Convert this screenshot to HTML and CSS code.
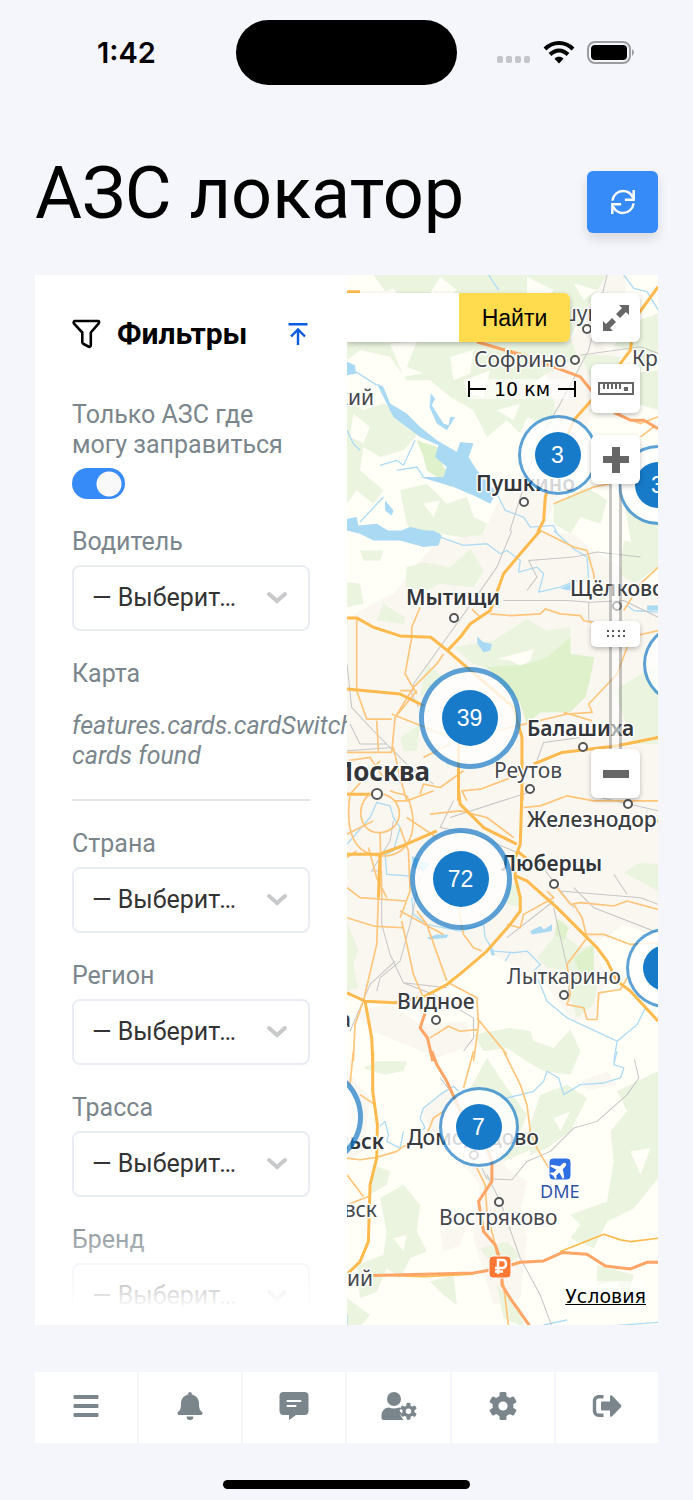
FILE: index.html
```html
<!DOCTYPE html>
<html lang="ru">
<head>
  <meta charset="UTF-8">
  <meta name="viewport" content="width=device-width, initial-scale=1.0">
  <title>АЗС локатор</title>
  <link rel="stylesheet" href="styles.css">
</head>
<body>
  <div class="status-bar">
    <span class="time">1:42</span>
    <span class="island"></span>
    <svg class="status-icons" width="140" height="26" viewBox="0 0 140 26">
      <g fill="#c3c5ca">
        <rect x="1" y="16" width="6" height="7" rx="2"/>
        <rect x="10" y="16" width="6" height="7" rx="2"/>
        <rect x="19" y="16" width="6" height="7" rx="2"/>
        <rect x="28" y="16" width="6" height="7" rx="2"/>
      </g>
      <g fill="none" stroke="#000" stroke-width="4">
        <path d="M49 9C57 1 69 1 77 9"/>
        <path d="M54 14.500C59.500 9 66.500 9 72 14.500"/>
      </g>
      <path d="M63 23.500L58.500 18.800C61 16.200 65 16.200 67.500 18.800Z"/>
      <rect x="92" y="2" width="42" height="21" rx="7" fill="none" stroke="#9b9ca0" stroke-width="2"/>
      <rect x="95" y="5" width="36" height="15" rx="4"/>
      <path d="M136 9q4 3.500 0 7z" fill="#9b9ca0"/>
    </svg>
  </div>

  <header class="page-header">
    <h1>АЗС локатор</h1>
    <button class="refresh" type="button" aria-label="Обновить">
      <svg width="26" height="26" viewBox="0 0 28 28" fill="none" stroke="#fff" stroke-width="2.600">
        <path d="M2.500 12.500C3.500 6 8.500 2.200 14 2.200c4.500 0 8.500 2.300 10.500 7"/>
        <path d="M25.500 1v10.500h-9.500"/>
        <path d="M25.500 15.500C24.500 22 19.500 25.800 14 25.800c-4.500 0-8.500-2.300-10.500-7"/>
        <path d="M2.500 27v-10.500h9.500"/>
      </svg>
    </button>
  </header>

  <main class="workspace">
    <section class="filters">
      <div class="filters-head">
        <svg width="29" height="30" viewBox="0 0 29 30" fill="none" stroke="#000" stroke-width="2.600" stroke-linejoin="round">
          <path d="M2.500 2h24q1.200 1 0 2.600L18.800 13.500V26.500q-.8 2-2.400 1L11.500 25q-1.200-.8-1.200-2V13.500L2 4.600Q1.200 3 2.500 2z"/>
        </svg>
        <h2>Фильтры</h2>
        <button class="collapse" type="button" aria-label="Свернуть">
          <svg width="20" height="24" viewBox="0 0 20 24" fill="none" stroke="#0a5be0" stroke-width="2.400">
            <path d="M.5 2.200h19M10 23V8M3 14.500L10 7.500l7 7"/>
          </svg>
        </button>
      </div>

      <form class="fields">
        <div class="field">
          <label for="only">Только АЗС где могу заправиться</label>
          <input class="switch" id="only" type="checkbox" checked>
        </div>
        <div class="field">
          <label for="driver">Водитель</label>
          <select id="driver"><option>— Выберите —</option></select>
        </div>
        <div class="field">
          <p class="caption">Карта</p>
          <p class="note">features.cards.cardSwitcher.No cards found</p>
        </div>
        <hr>
        <div class="field">
          <label for="country">Страна</label>
          <select id="country"><option>— Выберите —</option></select>
        </div>
        <div class="field">
          <label for="region">Регион</label>
          <select id="region"><option>— Выберите —</option></select>
        </div>
        <div class="field">
          <label for="route">Трасса</label>
          <select id="route"><option>— Выберите —</option></select>
        </div>
        <div class="field">
          <label for="brand">Бренд</label>
          <select id="brand"><option>— Выберите —</option></select>
        </div>
      </form>
    </section>

    <section class="map">
      <!-- terrain, three units per pixel, one group per tile -->
      <svg class="terrain" viewBox="0 0 933 3150" preserveAspectRatio="xMinYMin slice">
        <g transform="translate(-21 -15)">
          <path class="town" d="M620 300L700 200 800 15H860L840 240 760 400 720 540 640 700 600 810H420L470 700 560 600 620 480Z"/>
          <path class="wood" d="M100 15H800L740 110 690 200 710 260 620 310 560 350 640 380 650 480 560 440 540 490 500 450 440 500 400 420 330 380 270 330 200 330 150 260 60 240 21 270V70L140 70Z"/>
          <path class="wood" d="M21 390L70 420 130 400 210 440 235 490 190 540 120 560 70 530 60 600 130 660 100 700 50 660 21 700ZM180 660L260 640 320 700 380 680 400 740 440 760 420 810 300 790 230 810 200 760ZM720 250L840 260 830 310 760 350ZM760 200L953 130V240L900 300 880 250ZM640 700L740 650 800 690 780 760 720 740 690 790 640 760ZM850 690L953 760V880L880 860ZM870 310L953 300V420L890 400Z"/>
          <path class="field-hole" d="M120 70L160 55 210 130 130 150ZM300 20L350 60 310 90 270 70ZM150 220L230 215 200 290 250 310 190 320ZM330 260L400 240 390 310 340 330ZM370 330L450 300 430 380 380 370ZM300 480L350 430 410 440 390 500 330 500ZM470 420L540 400 520 450ZM560 20L640 60 610 100 560 70ZM700 40L770 60 730 90ZM40 430L90 470 70 520 30 500ZM250 700L300 690 280 740ZM780 220L830 210 810 250Z"/>
          <path class="park" d="M230 510L290 530 310 590 340 620 330 650 290 620 260 600 250 560Z"/>
          <path class="water" d="M21 275L45 285 48 310 21 315ZM110 340L130 350 150 400 200 430 240 470 290 510 350 545 360 515 400 520 385 560 410 600 445 640 470 665 450 700 410 680 340 650 240 620 310 620 320 590 285 560 295 525 240 500 200 470 160 440ZM272 370L285 385 275 405 310 460 325 465 330 440 345 440 320 480 290 460 268 410ZM135 690L160 720 155 735 135 720ZM21 745L50 740 55 765 110 760 160 790 210 770 300 790V810H100L60 790 21 780Z"/>
          <path class="river" d="M48 305L110 345M21 480L40 520 60 540M120 585L170 570 190 585 225 510M170 600L230 590 250 620M445 15L475 60M850 15L880 55 920 65 953 120M470 670L495 720 550 740 570 770 640 765 660 810M130 680L60 755"/>
          <path class="rail" d="M800 15L745 240 660 400 590 520 500 810M720 255L900 230 953 250"/>
          <path class="road thin" d="M410 215L560 255M820 430L900 460 953 440M900 500L940 470M640 700L760 650 810 640M600 800L700 810"/>
          <path class="road" d="M21 65H60M580 810L610 750 615 680 640 600 700 450 780 360 870 240 880 150 953 50"/>
          <path class="trunk" d="M410 215L560 260 720 320 760 370 830 430 870 450 910 450 953 475"/>
        </g>

        <g transform="translate(-21 765)">
          <path class="town" d="M300 30L520 0 700 10 760 60 953 180V830H21V270L60 240 160 190 250 80Z"/>
          <path class="wood" d="M60 60L130 60 120 90 70 90ZM21 155L60 160 70 220 21 230ZM200 110L250 95 330 110 390 55 430 120 400 170 300 160 260 180 195 170ZM110 270L130 220 195 260 190 280ZM340 350L460 330 560 265 620 300 690 290 690 370 760 380 740 440 650 420 460 420 400 400ZM850 30L953 50V110L880 160 840 130ZM820 480L953 400V640L880 640ZM180 620L240 580 230 660 190 660ZM260 400L310 440 240 500Z"/>
          <path class="park" d="M440 410L560 400 620 380 690 320 690 370 762 380 750 440 735 500 690 545 600 545 560 580 540 520Z"/>
          <path class="field-hole" d="M470 385L580 355 570 390 540 405 510 390ZM790 200L850 190 830 220Z"/>
          <path class="water" d="M60 0H280L305 15 295 45 250 50 180 30 90 0ZM410 318L430 335 455 340 450 360 430 365 412 340ZM660 175L710 150 690 180ZM920 225H953V240H920Z"/>
          <path class="river" d="M300 20L370 45 440 40 480 70 500 60 540 90 535 125 590 110 610 130 595 185 660 170 710 150M640 0L700 55 740 80 745 150M953 245L880 240 860 225"/>
          <path class="rail" d="M515 0L470 110 400 210 220 460 215 490 235 530M560 180L590 140 565 90 700 80 770 65 900 80M490 210L680 210 750 215 850 210 953 260M21 400L35 530 100 600 200 700 280 760M30 580L60 640 140 640M21 660L160 650M745 215V270L830 290M590 690L610 635 720 620"/>
          <path class="road thin" d="M50 265L50 480 80 565 155 565M310 370L290 400 220 470 165 560 155 665M240 230L215 290 215 320 195 430 230 490M395 235L420 260M450 250L510 255 600 250 615 235 660 250 720 255 730 270 770 280M600 0L700 50 740 60 760 130 765 170M953 110L900 160 850 240M470 600L680 550 755 545 745 520 830 430 860 350 840 320M865 320L953 300M380 810L365 780 420 775 540 730M155 550L330 620M155 665L21 665M110 570L115 660M165 560L230 480M180 480H215M670 545L755 570M250 680L330 640M21 690L90 680 130 740M160 650L180 740 200 810M120 690L30 790M370 720L300 770 250 760 240 790"/>
          <path class="road" d="M21 262H50L100 290 180 316 272 320 322 360 380 410 520 530 545 620 545 810M322 360L360 320 390 280 450 240 490 130 540 70 600 0M21 475L180 490 250 525M953 620L830 645 665 665 580 700M355 620V810M100 790H21"/>
        </g>

        <g transform="translate(-21 1545)">
          <path class="town" d="M21 30H953V440L850 400 760 460 800 560 760 680 700 690 600 560 430 480 330 560 240 620 120 640 21 600ZM40 660L150 640 240 700 380 690 400 760 290 800 100 720Z"/>
          <path class="wood" d="M21 390L55 480 40 520 55 590 21 600ZM850 245L900 215 953 220V300L880 260ZM500 290L540 270V345L500 340ZM650 380L680 400 680 440 720 470 760 460 760 540 775 560 760 640 710 680 690 620 700 540 620 530 590 500 640 440ZM400 730L510 710 570 720 580 750 640 770 690 715 720 780 690 850 610 840 560 810 500 770 430 780Z"/>
          <path class="park" d="M650 385L685 410 670 450 645 430ZM700 500L760 460V540L720 550Z"/>
          <path class="water" d="M260 440L290 430 325 430 320 440 270 445ZM570 420L600 405 610 415 635 400 635 420 575 430ZM445 460L465 490 455 495ZM215 195L270 220 250 240 220 230Z"/>
          <path class="river" d="M21 160L90 80 110 35 150 45 160 80 180 110 160 180 135 190 140 250 210 255M215 320L220 370 260 400 360 420 430 400 435 440 460 480 520 485 560 480 600 520 580 540 600 580 620 630 680 680 830 750 890 700 915 650M830 750L820 810M510 485L495 510"/>
          <path class="rail" d="M160 90L150 150 95 240 125 240 125 400 150 490 190 575 320 590M240 260L210 400 180 510 120 560 110 600M330 80L580 0M340 30L300 110 400 130 520 180 600 220 700 350M780 20L953 60M660 300L900 320 953 340M700 290L760 350 953 425M640 350L690 570 680 620M640 330L500 440M820 250L860 310M165 510L90 580 60 650 30 720M190 575L280 610 400 680V740L370 780"/>
          <path class="road thin" d="M110 0C40 20 50 130 120 125S200 30 130 10M30 10C15 120 40 190 120 195S230 130 215 60 190 20 150 0M120 125L125 320M200 80L290 140M180 110L205 180 210 300 180 380M160 30L200 30 280 0M100 90L21 130M85 170L110 260 140 320M21 290L60 320 200 330M230 360L260 400 320 570M21 380L100 405 190 410M180 360L310 430M185 390L220 550 250 620 240 660M115 320L110 460 70 630 45 700 40 810M355 350L370 430 400 470 425 480M50 180L21 200M270 70L360 60 440 80 520 140M550 50L600 45 680 15 760 30 953 30M500 400L540 410 550 370 640 320 620 300M650 290L690 340 720 335 820 345 860 330 953 355M700 340L725 380 740 440 680 520 690 610 680 640 730 650 740 685 770 685 775 605 840 595 860 560M740 430H790L870 460 953 455M270 740L325 705 360 720 410 715M325 575L410 620 415 700 400 810M410 680L500 790"/>
          <path class="road" d="M545 0L540 160 525 200 525 260 540 320 540 360 510 400 440 480 370 540 320 580 255 615 165 635 75 630 21 605M355 0L360 40 430 110 530 160M530 180L580 220M525 255L560 270 650 350 730 430 770 470 800 510 830 570 870 600 953 690M21 190L120 190 200 160 290 120M120 190L115 320M75 630L95 740 98 810"/>
          <path class="trunk" d="M255 665L240 710 262 740 278 810"/>
        </g>

        <g transform="translate(-21 2325)">
          <path class="town" d="M240 180L320 110 360 150 450 280 500 350 560 390 540 480 560 560 540 740 460 760 400 560 420 400 280 240ZM21 60L90 140 70 300 21 330ZM720 90L800 60 830 100 740 115ZM300 540L380 520 360 580 310 600Z"/>
          <path class="wood" d="M70 50L110 30 200 30 190 60 130 70ZM380 130L440 20 500 110 560 190 540 240 600 250 560 300 490 330 450 260ZM600 130L680 100 740 140 690 240 620 290 570 310 560 250ZM810 240L860 180 830 120 953 60V380L880 470 800 510 760 590 690 560 720 520 690 490 800 450 820 330ZM120 440L190 400 240 460 230 540 260 600 210 620 180 680 140 650 110 720 60 740 50 640 130 610 140 540ZM420 590L500 570 540 610 500 640 440 620ZM21 740L90 790 60 825H21ZM270 690L340 670 350 760 310 730ZM470 700L540 770 550 825 490 800ZM770 640L880 670 860 740 830 690 770 700ZM100 340L150 360 140 400 90 430Z"/>
          <path class="field-hole" d="M640 200L690 180 660 240ZM870 300L930 290 900 370ZM160 560L200 550 190 600Z"/>
          <path class="river" d="M830 0L820 40 850 50 840 80 790 95 720 100 670 130 655 80 620 60 610 90 580 120 500 140 440 190M355 120L340 105 300 130 250 170 240 200 255 230 240 240M120 225L135 210 145 250 140 270 180 290 190 240M610 820L680 805M820 822L953 812M21 790V825"/>
          <path class="rail" d="M882 25L895 80 860 130 770 210 700 230 630 300 560 330 515 385 440 382 425 350M300 80L340 130M440 370L480 450 540 620 600 730 635 825"/>
          <path class="road thin" d="M40 0L30 100M21 320L60 325 110 318 170 300 190 285 250 275 280 200 310 180M400 0L370 110M490 0L540 100 560 160 570 240 590 290 625 350M410 350L435 400 440 480 460 560 490 700 505 825M21 370L70 435M21 460L85 435M60 130L105 160"/>
          <path class="road" d="M98 0V120L112 220 110 320 90 400 85 570 60 630 21 668"/>
          <path class="road mid" d="M100 670L250 675 400 668M660 600L790 548 840 565 870 570 953 560"/>
          <path class="trunk" d="M275 0L290 40 320 90 370 200 440 290 455 330 455 390 415 450 430 540 465 580 485 640 485 700 510 740 570 825M100 672L400 664 480 650 540 632 610 628 665 603 740 608 795 643 870 652 920 632H953"/>
        </g>
      </svg>

      <!-- place names -->
      <svg class="places">
        <g class="dots">
          <circle cx="240" cy="54" r="4"/>
          <circle cx="228" cy="85" r="4"/>
          <circle cx="177" cy="227" r="4"/>
          <circle cx="107" cy="343" r="4"/>
          <circle cx="270" cy="331" r="4"/>
          <circle cx="236" cy="472" r="4"/>
          <circle cx="183" cy="514" r="4"/>
          <circle cx="30" cy="519" r="5"/>
          <circle cx="281" cy="529" r="4"/>
          <circle cx="207" cy="609" r="4"/>
          <circle cx="217" cy="720" r="4"/>
          <circle cx="89" cy="745" r="4"/>
          <circle cx="127" cy="880" r="4"/>
          <circle cx="152" cy="927" r="4"/>
        </g>
        <g class="names">
          <text x="211" y="46">шук</text>
          <text x="127" y="92">Софрино</text>
          <text x="285" y="91">Кр</text>
          <text x="27" y="130" text-anchor="end">кий</text>
          <text x="147" y="503">Реутов</text>
          <text x="160" y="709">Лыткарино</text>
          <text x="30" y="942" text-anchor="end">вск</text>
          <text x="26" y="1011" text-anchor="end">кий</text>
          <text x="92" y="950">Востряково</text>
        </g>
        <g class="names mid">
          <text x="223" y="321">Щёлково</text>
          <text x="180" y="552">Железнодорожный</text>
          <text x="50" y="734">Видное</text>
          <text x="4" y="752" text-anchor="end">ка</text>
          <text x="60" y="870">Домодедово</text>
        </g>
        <g class="names bold">
          <text x="129" y="216">Пушкино</text>
          <text x="59" y="330">Мытищи</text>
          <text x="180" y="461">Балашиха</text>
          <text x="154" y="596">Люберцы</text>
          <text x="37" y="874" text-anchor="end">Подольск</text>
          <text class="capital" x="83" y="506" text-anchor="end">Москва</text>
        </g>
        <g class="names airport"><text x="193" y="923">DME</text></g>
        <rect x="202" y="883" width="22" height="22" rx="4" fill="#2f6fe4" stroke="#fff"/>
        <path fill="#fff" d="M213 886q2 0 2 3v3l7 5v2l-7-2v4l2 2v1.500l-4-1-4 1V903l2-2v-4l-7 2v-2l7-5v-3q0-3 2-3z" transform="rotate(45 213 894)"/>
        <rect x="142" y="981" width="22" height="22" rx="4" fill="#ff7733" stroke="#fff"/>
        <path fill="none" stroke="#fff" stroke-width="2.500" d="M151 999V985h4q4 0 4 4t-4 4h-7M148 996.500h8"/>
      </svg>

      <button class="cluster small c1" type="button"><span>3</span></button>
      <button class="cluster small c2" type="button"><span>3</span></button>
      <button class="cluster large c3" type="button"><span>39</span></button>
      <button class="cluster small c4" type="button"><span></span></button>
      <button class="cluster large c5" type="button"><span>72</span></button>
      <button class="cluster small c6" type="button"><span></span></button>
      <button class="cluster large c7" type="button"><span></span></button>
      <button class="cluster small c8" type="button"><span>7</span></button>

      <div class="search">
        <input type="text" aria-label="Адрес">
        <button type="button">Найти</button>
      </div>

      <div class="scale">
        <svg width="18" height="16" viewBox="0 0 18 16"><path d="M1 0v16M1 8h17"/></svg>
        <span>10 км</span>
        <svg width="18" height="16" viewBox="0 0 18 16"><path d="M17 0v16M17 8H0"/></svg>
      </div>

      <div class="controls">
        <button class="control" type="button" aria-label="Развернуть">
          <svg width="26" height="26" viewBox="0 0 26 26" fill="#666">
            <path d="M16 0h10v10l-3-3-6 6-4-4 6-6zM10 26H0V16l3 3 6-6 4 4-6 6z"/>
          </svg>
        </button>
        <button class="control" type="button" aria-label="Линейка">
          <svg width="36" height="14" viewBox="0 0 36 14">
            <path fill="none" stroke="#666" stroke-width="2" d="M1 1h34v11H1zM6 1v6M10 1v6M14 1v6M18 1v6M22 1v6"/>
            <path fill="#666" d="M26 5h4v4h-4z"/>
          </svg>
        </button>
        <div class="zoom">
          <button class="control" type="button" aria-label="Приблизить">
            <svg width="26" height="26" viewBox="0 0 26 26"><path fill="#666" d="M9 0h8v9h9v7h-9v10H9V16H0V9h9z"/></svg>
          </button>
          <input type="range" min="3" max="17" value="9" aria-label="Масштаб">
          <button class="control" type="button" aria-label="Отдалить">
            <svg width="26" height="26" viewBox="0 0 26 26"><path fill="#666" d="M0 9h26v8H0z"/></svg>
          </button>
        </div>
      </div>

      <a class="terms" href="#">Условия</a>
    </section>
  </main>

  <nav class="tabs">
    <a href="#" aria-label="Меню">
      <svg width="36" height="28" viewBox="0 0 36 28">
        <rect x="5.500" y="3" width="25" height="4" rx="1"/><rect x="5.500" y="12" width="25" height="4" rx="1"/><rect x="5.500" y="21" width="25" height="4" rx="1"/>
      </svg>
    </a>
    <a href="#" aria-label="Уведомления">
      <svg width="36" height="28" viewBox="0 0 36 28">
        <path d="M18 0a1.800 1.800 0 0 1 1.800 1.800v.8C24 3.500 27 7 27 11.500c0 5 .8 6.500 2.800 8.300.8.800 1 1.400.6 2.200-.3.600-.8.900-1.600.9H7.200c-.8 0-1.300-.3-1.600-.9-.4-.8-.2-1.400.6-2.200C8.200 18 9 16.500 9 11.500 9 7 12 3.500 16.200 2.600v-.8A1.800 1.800 0 0 1 18 0zM14.500 24.600h7a3.500 3.500 0 0 1-7 0z"/>
      </svg>
    </a>
    <a href="#" aria-label="Сообщения">
      <svg width="36" height="28" viewBox="0 0 36 28">
        <path d="M7.500 0h21a4 4 0 0 1 4 4v15a4 4 0 0 1-4 4H20l-7 5.200V23H7.500a4 4 0 0 1-4-4V4a4 4 0 0 1 4-4z"/>
        <path stroke="#fff" stroke-width="2" stroke-linecap="round" d="M11.500 9h13M11.500 14h8"/>
      </svg>
    </a>
    <a href="#" aria-label="Профиль">
      <svg width="36" height="28" viewBox="0 0 36 28">
        <circle cx="13" cy="7" r="7"/>
        <path d="M.5 26v-2.500C.5 19 4 15.500 8 15.500c3 1.400 7 1.400 10 0l2.500.5-2 2.500 1.500 2-.5 3 3 4.500H2.500a2 2 0 0 1-2-2z"/>
        <g transform="translate(27.500 19.200)">
          <circle r="6"/>
          <rect x="-2" y="-8.500" width="4" height="17" rx="1"/>
          <rect x="-2" y="-8.500" width="4" height="17" rx="1" transform="rotate(60)"/>
          <rect x="-2" y="-8.500" width="4" height="17" rx="1" transform="rotate(120)"/>
          <circle r="2.700" fill="#fff"/>
        </g>
      </svg>
    </a>
    <a href="#" aria-label="Настройки">
      <svg width="36" height="28" viewBox="0 0 36 28">
        <g transform="translate(18 14)">
          <circle r="10.500"/>
          <rect x="-3.500" y="-14" width="7" height="28" rx="1.500"/>
          <rect x="-3.500" y="-14" width="7" height="28" rx="1.500" transform="rotate(60)"/>
          <rect x="-3.500" y="-14" width="7" height="28" rx="1.500" transform="rotate(120)"/>
          <circle r="4.600" fill="#fff"/>
        </g>
      </svg>
    </a>
    <a href="#" aria-label="Выход">
      <svg width="36" height="28" viewBox="0 0 36 28">
        <path d="M14.500 4.800H9.500a4 4 0 0 0-4 4v10.400a4 4 0 0 0 4 4h5" fill="none" stroke="#7b868c" stroke-width="3.400"/>
        <path d="M12 10.500q0-1 1-1h8V4.500q.2-2 2-1L32 13q.8 1 0 2l-9 9.500q-1.800 1-2-1V18.500h-8q-1 0-1-1z"/>
      </svg>
    </a>
  </nav>
  <div class="home-indicator"></div>
</body>
</html>
```
FILE: styles.css
```css
* {
  box-sizing: border-box;
}
body {
  margin: 0;
  height: 100vh;
  display: flex;
  flex-direction: column;
  background: #f4f6fb;
  color: #000;
  font-family: Roboto, "Open Sans", sans-serif;
  font-size: 25px;
  line-height: 30px;
}
h1, h2, p {
  margin: 0;
}
button, input, select {
  margin: 0;
  padding: 0;
  border: 0;
  font: inherit;
}
svg {
  display: block;
}

/* status bar */
.status-bar {
  display: grid;
  grid-template-columns: 1fr 221px 1fr;
  align-items: center;
  padding: 20px 57px 0;
}
.time {
  padding-left: 40px;
  font-family: Inter, sans-serif;
  font-size: 29px;
  font-weight: 600;
}
.island {
  height: 65px;
  border-radius: 33px;
  background: #000;
}
.status-icons {
  justify-self: end;
}

/* header */
.page-header {
  display: flex;
  justify-content: space-between;
  align-items: center;
  padding: 64px 35px 36px;
}
h1 {
  font-size: 72px;
  font-weight: 400;
  line-height: 90px;
}
.refresh {
  display: flex;
  justify-content: center;
  align-items: center;
  width: 71px;
  height: 62px;
  margin-top: 16px;
  border-radius: 6px;
  background: #378bf8;
  box-shadow: 0 6px 12px rgba(0, 0, 0, 0.12);
}

.workspace {
  flex: 1;
  min-height: 0;
  display: grid;
  grid-template-columns: 1fr 1fr;
  grid-template-rows: 100%;
  margin: 0 35px;
}

/* filters */
.filters {
  position: relative;
  min-width: 0;
  overflow: hidden;
  padding: 41px 37px 0;
  background: #fff;
}
.filters::after {
  content: "";
  position: absolute;
  left: 0;
  right: 0;
  bottom: 0;
  height: 110px;
  background: linear-gradient(rgba(255, 255, 255, 0), #fff 85%);
}
.filters-head {
  display: flex;
  align-items: center;
  height: 36px;
  margin-bottom: 48px;
}
h2 {
  flex: 1;
  margin-left: 16px;
  font-size: 30px;
  font-weight: 700;
}
.collapse {
  padding: 2px;
  background: none;
}
.field {
  margin-bottom: 28px;
  color: #7b868c;
}
.field label, .caption {
  display: block;
  margin-bottom: 8px;
}
.note {
  margin-top: 22px;
  font-style: italic;
}
hr {
  height: 2px;
  margin: 0 0 28px;
  border: 0;
  background: #e2e3e6;
}
.switch {
  appearance: none;
  display: block;
  width: 53px;
  height: 31px;
  border-radius: 16px;
  background: radial-gradient(circle at 37px 16px, #f9f9f9 12px, #378bf8 13px);
}
select {
  appearance: none;
  display: block;
  width: 100%;
  height: 66px;
  padding: 0 62px 0 18px;
  border: 2px solid #e9ecf2;
  border-radius: 8px;
  background: #fff url("data:image/svg+xml,%3Csvg xmlns='http://www.w3.org/2000/svg' width='22' height='14'%3E%3Cpath d='M3 3l8 7 8-7' fill='none' stroke='%23c8c9cb' stroke-width='4' stroke-linecap='round'/%3E%3C/svg%3E") no-repeat right 20px center;
  color: #333;
  text-overflow: ellipsis;
  white-space: nowrap;
  overflow: hidden;
}

/* map */
.map {
  position: relative;
  min-width: 0;
  overflow: hidden;
  background: #fffef7;
}
.terrain, .places {
  position: absolute;
  top: 0;
  left: 0;
  width: 100%;
  height: 100%;
}
.town { fill: #faf6f0; }
.wood { fill: #eaf4df; }
.park { fill: #def1cb; }
.field-hole { fill: #fffef7; }
.water { fill: #a9d9f3; }
.river, .rail, .road, .trunk {
  fill: none;
  stroke-linejoin: round;
}
.river {
  stroke: #afdcf4;
  stroke-width: 4;
}
.rail {
  stroke: #c6c6c6;
  stroke-width: 3;
}
.road {
  stroke: #ffba4d;
  stroke-width: 9;
}
.road.mid {
  stroke-width: 5;
}
.road.thin {
  stroke: #ffc57a;
  stroke-width: 5;
}
.trunk {
  stroke: #ffa566;
  stroke-width: 9;
}
.dots {
  fill: #fff;
  stroke: #555;
  stroke-width: 2;
}
.names {
  font-family: "Noto Sans", sans-serif;
  font-size: 21px;
  fill: #45484c;
  stroke: #fff;
  stroke-width: 3px;
  stroke-linejoin: round;
  paint-order: stroke;
}
.names.mid {
  font-weight: 500;
  fill: #3a3c40;
}
.names.bold {
  font-weight: 600;
  fill: #333539;
}
.capital {
  font-size: 26px;
  font-weight: 700;
}
.names.airport {
  font-size: 18px;
  fill: #2f55a4;
}

.cluster {
  position: absolute;
  display: flex;
  justify-content: center;
  align-items: center;
  border: 3px solid rgba(23, 123, 201, 0.7);
  border-radius: 50%;
  background: rgba(255, 255, 255, 0.8);
  background-clip: padding-box;
  color: #fff;
  font-family: "Liberation Sans", Arial, sans-serif;
  font-size: 23px;
  transform: translate(-50%, -50%);
}
.cluster span {
  width: 46px;
  height: 46px;
  border-radius: 50%;
  background: #177bc9;
  line-height: 46px;
}
.small {
  width: 80px;
  height: 80px;
}
.large {
  width: 102px;
  height: 102px;
  border-width: 5px;
}
.large span {
  width: 56px;
  height: 56px;
  line-height: 56px;
}
.c1 { left: 211px; top: 180px; }
.c2 { left: 311px; top: 210px; }
.c3 { left: 123px; top: 443px; }
.c4 { left: 336px; top: 389px; }
.c5 { left: 114px; top: 604px; }
.c6 { left: 319px; top: 693px; }
.c7 { left: -35px; top: 842px; }
.c8 { left: 132px; top: 852px; }

.search {
  position: absolute;
  top: 18px;
  left: 0;
  right: 88px;
  display: flex;
  height: 49px;
  border-radius: 0 6px 6px 0;
  overflow: hidden;
  box-shadow: 0 2px 5px rgba(0, 0, 0, 0.25);
}
.search input {
  flex: 1;
  min-width: 0;
  background: #fff;
}
.search button {
  width: 111px;
  background: #ffdb4d;
  color: #000;
  font-family: "Liberation Sans", Arial, sans-serif;
  font-size: 23px;
}
.scale {
  position: absolute;
  top: 104px;
  right: 82px;
  display: flex;
  align-items: center;
  gap: 8px;
  height: 20px;
  background: rgba(255, 255, 255, 0.6);
  font-family: "DejaVu Sans", Verdana, sans-serif;
  font-size: 19px;
}
.scale svg {
  fill: none;
  stroke: #000;
  stroke-width: 2;
}
.controls {
  position: absolute;
  top: 18px;
  right: 18px;
  display: flex;
  flex-direction: column;
  gap: 22px;
}
.control {
  display: flex;
  justify-content: center;
  align-items: center;
  width: 49px;
  height: 49px;
  border-radius: 6px;
  background: #fff;
  box-shadow: 0 2px 5px rgba(0, 0, 0, 0.25);
}
.zoom input {
  appearance: none;
  display: block;
  width: 49px;
  height: 265px;
  writing-mode: vertical-lr;
  direction: rtl;
  background: linear-gradient(to right, transparent 18px, rgba(130, 130, 130, 0.45) 18px, rgba(130, 130, 130, 0.45) 21px, rgba(255, 255, 255, 0.6) 21px, rgba(255, 255, 255, 0.6) 28px, rgba(130, 130, 130, 0.45) 28px, rgba(130, 130, 130, 0.45) 31px, transparent 31px);
}
.zoom input::-webkit-slider-thumb {
  appearance: none;
  width: 49px;
  height: 26px;
  border-radius: 5px;
  background: #fff url("data:image/svg+xml,%3Csvg xmlns='http://www.w3.org/2000/svg' width='20' height='8' fill='%23555'%3E%3Cpath d='M1 0h2v2H1zM6 0h2v2H6zM12 0h2v2h-2zM17 0h2v2h-2zM1 5h2v2H1zM6 5h2v2H6zM12 5h2v2h-2zM17 5h2v2h-2z'/%3E%3C/svg%3E") no-repeat center;
  box-shadow: 0 2px 5px rgba(0, 0, 0, 0.25);
}
.terms {
  position: absolute;
  right: 12px;
  bottom: 14px;
  background: rgba(255, 255, 255, 0.6);
  color: #000;
  font-family: "DejaVu Sans", Verdana, sans-serif;
  font-size: 19px;
}

/* bottom tabs */
.tabs {
  display: grid;
  grid-template-columns: repeat(6, 1fr);
  gap: 2px;
  margin: 47px 35px 37px;
}
.tabs a {
  display: flex;
  justify-content: center;
  align-items: center;
  height: 71px;
  padding-bottom: 3px;
  background: #fff;
}
.tabs svg {
  fill: #7b868c;
}
.home-indicator {
  align-self: center;
  width: 247px;
  height: 9px;
  margin-bottom: 11px;
  border-radius: 5px;
  background: #000;
}
```
